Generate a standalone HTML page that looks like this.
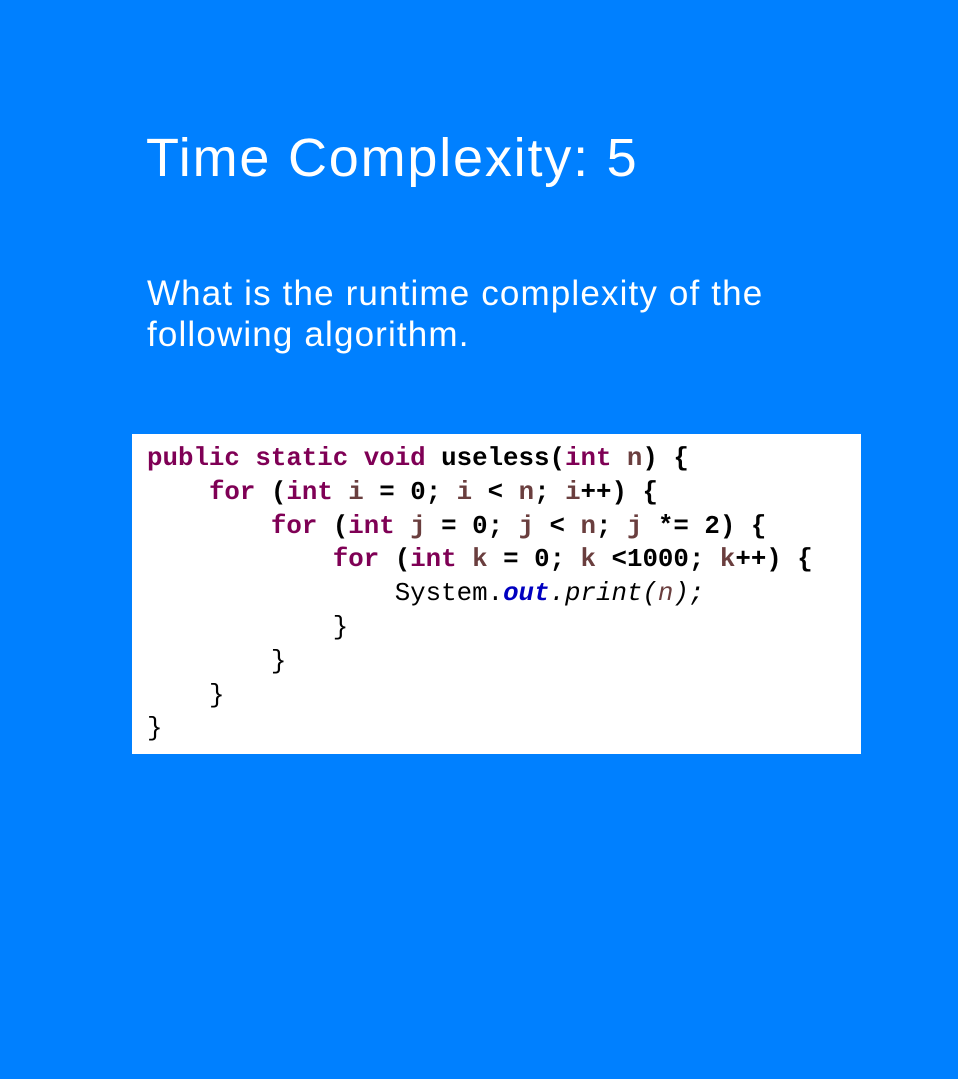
<!DOCTYPE html>
<html><head><style>
body{margin:0;width:958px;height:1079px;background:#0080ff;position:relative;overflow:hidden;font-family:"Liberation Sans",sans-serif;color:#fff}
h1{position:absolute;left:146px;top:124px;margin:0;font-weight:normal;font-size:54px;line-height:68px;letter-spacing:1.8px}
.p{position:absolute;left:147px;top:273px;font-size:35px;line-height:41px;width:780px;letter-spacing:1.15px}
.code{position:absolute;left:132px;top:434px;width:729px;height:320px;background:#fff}
pre{margin:0;position:absolute;left:15px;top:8px;font-family:"Liberation Mono",monospace;font-size:25.8px;line-height:33.8px;font-weight:bold;color:#000}
.k{color:#7f0055}.v{color:#6a3e3e}.f{color:#0000c0;font-style:italic}.n{font-weight:normal}.i{font-style:italic;font-weight:normal}
</style></head><body>
<h1>Time Complexity: 5</h1>
<div class="p">What is the runtime complexity of the<br>following algorithm.</div>
<div class="code"><pre><span class="k">public static void</span> useless(<span class="k">int</span> <span class="v">n</span>) {
    <span class="k">for</span> (<span class="k">int</span> <span class="v">i</span> = 0; <span class="v">i</span> &lt; <span class="v">n</span>; <span class="v">i</span>++) {
        <span class="k">for</span> (<span class="k">int</span> <span class="v">j</span> = 0; <span class="v">j</span> &lt; <span class="v">n</span>; <span class="v">j</span> *= 2) {
            <span class="k">for</span> (<span class="k">int</span> <span class="v">k</span> = 0; <span class="v">k</span> &lt;1000; <span class="v">k</span>++) {
                <span class="n">System.</span><span class="f">out</span><span class="i">.print(<span class="v">n</span>);</span>
            <span class="n">}</span>
        <span class="n">}</span>
    <span class="n">}</span>
<span class="n">}</span></pre></div>
</body></html>
